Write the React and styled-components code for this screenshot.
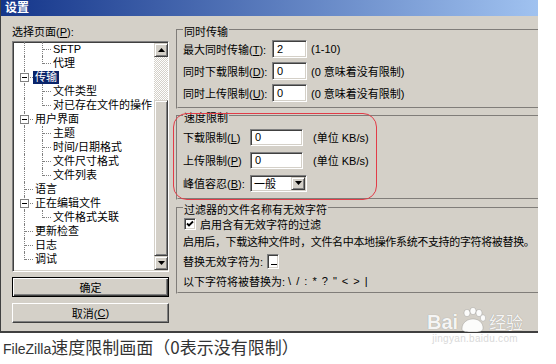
import React from 'react'
import styled, { createGlobalStyle, css } from 'styled-components'

const GlobalStyle = createGlobalStyle`
  html, body { margin: 0; padding: 0; background: #fff; }
  body { font-family: "Liberation Sans", "Noto Sans CJK SC", sans-serif; }
  *, *::before, *::after { box-sizing: border-box; }
`

const raised = css`
  border: 1px solid;
  border-color: #d4d0c8 #404040 #404040 #d4d0c8;
  box-shadow: inset 1px 1px #fff, inset -1px -1px #808080;
  background: #d4d0c8;
`

const sunken = css`
  border: 1px solid;
  border-color: #808080 #fff #fff #808080;
  box-shadow: inset 1px 1px #404040, inset -1px -1px #d4d0c8;
  background: #fff;
`

const Page = styled.div`
  position: relative;
  width: 556px;
  height: 364px;
  overflow: hidden;
  background: #fff;
`

const Dialog = styled.div`
  width: 538px;
  height: 333px;
  background: #d4d0c8;
  border-left: 1px solid #404040;
  border-bottom: 2px solid #404040;
  overflow: hidden;
  font-size: 11px;
  color: #000;
  font-family: "Liberation Sans", "Noto Sans CJK SC", sans-serif;
`

const TitleBar = styled.div`
  height: 16px;
  line-height: 16px;
  padding-left: 4px;
  background: linear-gradient(to right, #14358a, #a0c2f0);
  color: #fff;
  font-weight: bold;
  font-size: 12px;
`

const Body = styled.div`
  display: flex;
  padding: 9px 0 0 11px;
`

const LeftCol = styled.div`
  width: 157px;
  flex: none;
  display: flex;
  flex-direction: column;
`

const PageLabel = styled.div`
  height: 14px;
  line-height: 14px;
`

const Tree = styled.div`
  ${sunken};
  margin-top: 2px;
  height: 231px;
  padding: 1px;
  display: flex;
  overflow: hidden;
`

const TreeList = styled.div`
  flex: 1;
  margin-top: -1px;
  padding-left: 1px;
`

const TreeRow = styled.div`
  display: flex;
  align-items: center;
  height: 14px;
  white-space: nowrap;
`

const Cell = styled.span`
  position: relative;
  flex: none;
  width: 18px;
  height: 14px;

  &::before {
    content: '';
    display: ${p => (p.$kind === 'none' ? 'none' : 'block')};
    position: absolute;
    left: 9px;
    top: 0;
    height: ${p => (p.$kind === 'elbow' ? '8px' : '14px')};
    border-left: 1px dotted #808080;
  }

  &::after {
    content: '';
    display: ${p => (p.$kind === 'tee' || p.$kind === 'elbow' ? 'block' : 'none')};
    position: absolute;
    left: 10px;
    top: 7px;
    width: 8px;
    border-top: 1px dotted #808080;
  }
`

const ExpandBox = styled.span`
  position: absolute;
  z-index: 1;
  left: 5px;
  top: 3px;
  width: 9px;
  height: 9px;
  border: 1px solid #808080;
  background: #fff;

  &::after {
    content: '';
    position: absolute;
    left: 1px;
    top: 3px;
    width: 5px;
    height: 1px;
    background: #000;
  }
`

const TreeLabel = styled.span`
  padding: 0 2px;
  line-height: 13px;
  background: ${p => (p.$selected ? '#0a246a' : 'transparent')};
  color: ${p => (p.$selected ? '#fff' : '#000')};
`

const ScrollBar = styled.div`
  width: 14px;
  flex: none;
  display: flex;
  flex-direction: column;
`

const ScrollBtn = styled.div`
  ${raised};
  height: 14px;
  flex: none;
  display: flex;
  align-items: center;
  justify-content: center;
`

const Track = styled.div`
  height: 43px;
  flex: none;
  background: repeating-conic-gradient(#fff 0 25%, #d4d0c8 0 50%) 0 0 / 2px 2px;
`

const Thumb = styled.div`
  ${raised};
  flex: 1;
`

const Button = styled.div`
  height: 20px;
  margin-top: ${p => p.$mt}px;
  display: flex;
  align-items: center;
  justify-content: center;
  background: #d4d0c8;
  border: 1px solid;
  ${p =>
    p.$default
      ? css`
          border-color: #000;
          box-shadow: inset 1px 1px #fff, inset -1px -1px #404040, inset -2px -2px #808080;
        `
      : css`
          border-color: #fff #404040 #404040 #fff;
          box-shadow: inset -1px -1px #808080, inset 1px 1px #d4d0c8;
        `}
`

const RightCol = styled.div`
  margin-left: 7px;
  width: 400px;
  flex: none;
  padding-top: 1px;
`

const Group = styled.fieldset`
  margin: ${p => p.$mt || 0}px 0 0 0;
  padding: ${p => p.$pt}px 0 ${p => p.$pb}px 5px;
  border: 2px groove #d4d0c8;
  min-width: 0;
`

const Legend = styled.legend`
  padding: 0 1px;
  height: 8px;
  line-height: 12px;
  white-space: nowrap;
`

const Annotated = styled.div`
  position: relative;
  margin-top: 3px;
`

const RedMark = styled.div`
  position: absolute;
  left: -3px;
  top: 1px;
  width: 204px;
  height: 87px;
  border: 1.5px solid #e23c48;
  border-radius: 14px;
  pointer-events: none;
`

const Row = styled.div`
  display: flex;
  align-items: center;
  height: ${p => p.$h || 18}px;
  margin-top: ${p => p.$mt || 0}px;
  white-space: nowrap;
`

const Label = styled.span`
  width: ${p => (p.$w ? `${p.$w}px` : 'auto')};
  flex: none;
  letter-spacing: ${p => p.$ls || 0}px;
`

const Field = styled.div`
  ${sunken};
  width: ${p => p.$w}px;
  height: ${p => p.$h || 18}px;
  flex: none;
  padding-left: 4px;
  display: flex;
  align-items: center;
  margin-left: ${p => p.$ml || 0}px;
`

const Blank = styled.div`
  ${sunken};
  width: 12px;
  height: 15px;
  flex: none;
  margin-left: 4px;
  position: relative;

  &::after {
    content: '';
    position: absolute;
    left: 3px;
    bottom: 3px;
    width: 6px;
    height: 1px;
    background: #000;
  }
`

const Note = styled.span`
  margin-left: ${p => p.$ml}px;
`

const Select = styled.div`
  ${sunken};
  width: 57px;
  height: 17px;
  display: flex;
  align-items: center;
  padding: 1px 1px 1px 3px;
`

const SelectText = styled.span`
  flex: 1;
`

const DropBtn = styled.div`
  ${raised};
  width: 14px;
  height: 13px;
  display: flex;
  align-items: center;
  justify-content: center;
`

const Check = styled.div`
  ${sunken};
  width: 12px;
  height: 12px;
  margin-left: 1px;
  margin-right: 4px;
  display: flex;
  align-items: center;
  justify-content: center;
`

const Chars = styled.span`
  letter-spacing: 1px;
  margin-left: 3px;
`

const Caption = styled.div`
  height: 31px;
  line-height: 28px;
  padding-left: 3px;
  color: #333;
  font-size: 17px;
  font-family: "Noto Sans CJK SC", sans-serif;
  white-space: nowrap;
`

const Latin = styled.span`
  font-family: "Liberation Sans", sans-serif;
  font-size: 14px;
`

const Watermark = styled.div`
  position: absolute;
  left: 427px;
  top: 305px;
  display: flex;
  flex-direction: column;
  align-items: center;
  pointer-events: none;
`

const WmTop = styled.div`
  display: flex;
  align-items: flex-end;
  height: 28px;
  color: rgba(255, 255, 255, 0.92);
  text-shadow: 0 0 1px rgba(0, 0, 0, 0.3);
`

const WmBai = styled.span`
  font-family: "Liberation Sans", sans-serif;
  font-weight: bold;
  font-size: 20px;
  line-height: 22px;
`

const WmJy = styled.span`
  font-family: "Noto Sans CJK SC", sans-serif;
  font-size: 17px;
  line-height: 22px;
  margin-left: 1px;
`

const WmUrl = styled.span`
  font-family: "Liberation Sans", sans-serif;
  font-size: 10px;
  line-height: 12px;
  color: #d9d9d9;
  letter-spacing: 0.3px;
`

const Arrow = ({ down }) => (
  <svg width="7" height="4" viewBox="0 0 7 4">
    <polygon points={down ? '0,0 7,0 3.5,4' : '0,4 7,4 3.5,0'} fill="#000" />
  </svg>
)

const CheckMark = () => (
  <svg width="8" height="8" viewBox="0 0 8 8">
    <polyline points="1,3.5 3,5.5 7,1.5" fill="none" stroke="#000" strokeWidth="1.8" />
  </svg>
)

const Paw = () => (
  <svg width="30" height="26" viewBox="0 0 30 26">
    <g fill="rgba(255,255,255,0.92)" stroke="rgba(0,0,0,0.18)" strokeWidth="0.8">
      <ellipse cx="9" cy="6" rx="3" ry="3.6" />
      <ellipse cx="15" cy="4" rx="3" ry="3.6" />
      <ellipse cx="21" cy="6" rx="3" ry="3.6" />
      <ellipse cx="25" cy="11" rx="2.6" ry="3.2" />
      <path d="M4 22 C4 15 10 12 15 12 C21 12 25 16 25 21 C25 25 21 25 15 25 C9 25 4 25 4 22 Z" />
    </g>
  </svg>
)

const treeRows = [
  { label: 'SFTP', cells: ['pipe', 'tee'] },
  { label: '代理', cells: ['pipe', 'elbow'] },
  { label: '传输', cells: ['tee'], box: true, selected: true },
  { label: '文件类型', cells: ['pipe', 'tee'] },
  { label: '对已存在文件的操作', cells: ['pipe', 'elbow'] },
  { label: '用户界面', cells: ['tee'], box: true },
  { label: '主题', cells: ['pipe', 'tee'] },
  { label: '时间/日期格式', cells: ['pipe', 'tee'] },
  { label: '文件尺寸格式', cells: ['pipe', 'tee'] },
  { label: '文件列表', cells: ['pipe', 'elbow'] },
  { label: '语言', cells: ['tee'] },
  { label: '正在编辑文件', cells: ['tee'], box: true },
  { label: '文件格式关联', cells: ['pipe', 'elbow'] },
  { label: '更新检查', cells: ['tee'] },
  { label: '日志', cells: ['tee'] },
  { label: '调试', cells: ['elbow'] },
]

function App() {
  return (
    <Page>
      <GlobalStyle />
      <Dialog>
        <TitleBar>设置</TitleBar>
        <Body>
          <LeftCol>
            <PageLabel>选择页面(<u>P</u>):</PageLabel>
            <Tree>
              <TreeList>
                {treeRows.map(r => (
                  <TreeRow key={r.label}>
                    {r.cells.map((c, i) => (
                      <Cell key={i} $kind={c}>
                        {r.box && i === r.cells.length - 1 && <ExpandBox />}
                      </Cell>
                    ))}
                    <TreeLabel $selected={r.selected}>{r.label}</TreeLabel>
                  </TreeRow>
                ))}
              </TreeList>
              <ScrollBar>
                <ScrollBtn><Arrow /></ScrollBtn>
                <Track />
                <Thumb />
                <ScrollBtn><Arrow down /></ScrollBtn>
              </ScrollBar>
            </Tree>
            <Button $mt={5} $default>确定</Button>
            <Button $mt={6}>取消(<u>C</u>)</Button>
          </LeftCol>

          <RightCol>
            <Group $pt={6} $pb={5}>
              <Legend>同时传输</Legend>
              <Row>
                <Label $w={89}>最大同时传输(<u>T</u>):</Label>
                <Field $w={35}>2</Field>
                <Note $ml={4}>(1-10)</Note>
              </Row>
              <Row $mt={4}>
                <Label $w={89}>同时下载限制(<u>D</u>):</Label>
                <Field $w={35}>0</Field>
                <Note $ml={4}>(0 意味着没有限制)</Note>
              </Row>
              <Row $mt={4}>
                <Label $w={89}>同时上传限制(<u>U</u>):</Label>
                <Field $w={35}>0</Field>
                <Note $ml={4}>(0 意味着没有限制)</Note>
              </Row>
            </Group>

            <Annotated>
              <Group $pt={8} $pb={6}>
                <Legend>速度限制</Legend>
                <Row>
                  <Label $w={67}>下载限制(<u>L</u>)</Label>
                  <Field $w={53} $h={17}>0</Field>
                  <Note $ml={10}>(单位 KB/s)</Note>
                </Row>
                <Row $mt={5}>
                  <Label $w={67}>上传限制(<u>P</u>)</Label>
                  <Field $w={53} $h={17}>0</Field>
                  <Note $ml={10}>(单位 KB/s)</Note>
                </Row>
                <Row $mt={5}>
                  <Label $w={67}>峰值容忍(<u>B</u>):</Label>
                  <Select>
                    <SelectText>一般</SelectText>
                    <DropBtn><Arrow down /></DropBtn>
                  </Select>
                </Row>
              </Group>
              <RedMark />
            </Annotated>

            <Group $mt={4} $pt={0} $pb={4}>
              <Legend>过滤器的文件名称有无效字符</Legend>
              <Row $h={14} $mt={5}>
                <Check><CheckMark /></Check>
                <Label>启用含有无效字符的过滤</Label>
              </Row>
              <Row $h={14} $mt={3}>
                <Label $ls={-0.35}>启用后，下载这种文件时，文件名中本地操作系统不支持的字符将被替换。</Label>
              </Row>
              <Row $h={16} $mt={5}>
                <Label>替换无效字符为:</Label>
                <Blank />
              </Row>
              <Row $h={14} $mt={5}>
                <Label>以下字符将被替换为:</Label>
                <Chars>{'\\ / : * ? " < > |'}</Chars>
              </Row>
            </Group>
          </RightCol>
        </Body>
      </Dialog>
      <Caption>
        <Latin>FileZilla</Latin>速度限制画面（0表示没有限制）
      </Caption>
      <Watermark>
        <WmTop>
          <WmBai>Bai</WmBai>
          <Paw />
          <WmJy>经验</WmJy>
        </WmTop>
        <WmUrl>jingyan.baidu.com</WmUrl>
      </Watermark>
    </Page>
  )
}

export default App
